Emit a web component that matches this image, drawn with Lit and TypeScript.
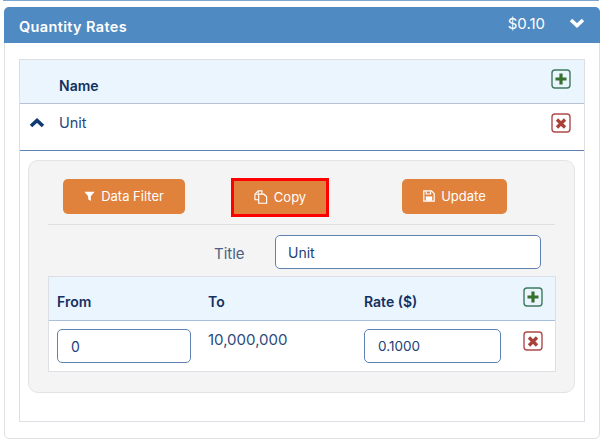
import { LitElement, html, css, svg } from "lit";
import { customElement } from "lit/decorators.js";

const chevron = (up: boolean) => html`<svg class="chev" viewBox="0 0 16 10" width="16" height="10">
  <path d=${up ? "M2 8 L8 2.5 L14 8" : "M2 2 L8 7.5 L14 2"} fill="none" stroke="currentColor" stroke-width="3.6"></path></svg>`;

const plus = html`<svg class="ico" viewBox="0 0 20 20" width="20" height="20">
  <rect x="1" y="1" width="18" height="18" rx="3" fill="none" stroke="#3f7a5c" stroke-width="1.4"></rect>
  <path d="M10 4.5V15.5M4.5 10H15.5" stroke="#37702f" stroke-width="3.2"></path></svg>`;

const cross = html`<svg class="ico" viewBox="0 0 20 20" width="20" height="20">
  <rect x="1" y="1" width="18" height="18" rx="3" fill="none" stroke="#b04a4a" stroke-width="1.4"></rect>
  <path d="M6 6.5L14 14.5M14 6.5L6 14.5" stroke="#a8413a" stroke-width="3.2"></path></svg>`;

const funnel = svg`<path d="M0.5 1.5H13.5L8.7 7.4V13.5L5.3 11V7.4Z" fill="#fff"></path>`;
const copy = svg`<path d="M4.5 10.5H1V4.5L4.5 1H8.5V4.5" fill="none" stroke="#fff" stroke-width="1.2"></path><path d="M1 4.5H4.5V1" fill="none" stroke="#fff" stroke-width="1"></path><path d="M5 4.5H10.5L13.5 7V14.2H5Z" fill="none" stroke="#fff" stroke-width="1.3"></path>`;
const save = svg`<path d="M1 1H10.5L14 4.5V14H1Z" fill="none" stroke="#fff" stroke-width="1.5"></path><path d="M4 1.5V5H9.5V1.5" fill="none" stroke="#fff" stroke-width="1.4"></path><rect x="3.5" y="8" width="8" height="5.5" fill="#fff"></rect>`;

@customElement("app-root")
export class AppRoot extends LitElement {
  static styles = css`
    :host { display: block; width: 602px; height: 442px; overflow: hidden; background: #fff; font-family: Inter, "Liberation Sans", sans-serif; color: #1c3f78; font-size: 14px; box-sizing: border-box; position: relative; }
    * { box-sizing: border-box; }
    .topline { height: 1px; margin: 0 3px; background: #7fa6cf; }
    .panel { margin: 6px 2px 0 4px; height: 432px; border: 1px solid #e0e0e0; border-radius: 5px; background: #fff; }
    .head { height: 36px; margin: -1px -1px 0; background: #4f8ac2; color: #fff; display: flex; align-items: center; padding: 0 15px 0 15px; border-radius: 5px 5px 0 0; }
    .head .t { flex: 1; font-weight: 600; font-size: 14.5px; letter-spacing: 0.35px; position: relative; top: 1px; }
    .head .p { font-size: 15px; margin-right: 24px; position: relative; top: -2px; }
    .head .chev { color: #fff; position: relative; top: -2px; }
    .body { padding: 16px 14px 0 14px; }
    .outer { height: 363px; border: 1px solid #dcdfe4; }
    .hrow { height: 44px; background: #eaf5fe; border-bottom: 1px solid #b6c3d6; display: flex; padding-left: 39px; padding-right: 13px; justify-content: space-between; }
    .name { font-weight: 600; font-size: 14px; color: #14305f; padding-top: 17px; }
    .hrow .ico { margin-top: 9px; }
    .urow { height: 47px; border-bottom: 1px solid #5f82b2; display: flex; padding: 0 13px 0 9px; }
    .urow .chev { color: #0f3a73; margin-top: 14px; }
    .urow .u { flex: 1; padding: 10px 0 0 14px; font-size: 14.5px; color: #25477d; }
    .urow .ico { margin-top: 9px; }
    .inner { margin: 9px 9px 0 8px; height: 233px; background: #f4f4f4; border: 1px solid #e3e3e3; border-radius: 10px; padding: 18px 19px 0 19px; }
    .btns { height: 46px; border-bottom: 1px solid #dfdfdf; display: flex; align-items: flex-start; padding-left: 15px; }
    .btn { width: 122px; height: 35px; background: #e0813c; color: #fff; border-radius: 5px; display: flex; align-items: center; justify-content: center; gap: 6px; font-size: 13px; padding-bottom: 1px; }
    .btn svg { flex: none; }
    .b2 { margin-left: 46px; height: 39px; margin-top: -1px; border: 3px solid #f00; border-radius: 0; width: 98px; }
    .b3 { margin-left: 73px; width: 105px; }
    .titlerow { height: 51px; display: flex; align-items: flex-start; padding: 10px 0 0 166px; }
    .titlerow label { font-size: 15px; width: 61px; padding-top: 9px; color: #4d5f86; }
    .inp { height: 34px; border: 1px solid #5f82b2; border-radius: 5px; background: #fff; font-size: 14px; color: #1c3f78; display: flex; align-items: center; }
    .titlerow .inp { width: 266px; padding-left: 12px; }
    .rates { width: 508px; height: 96px; border: 1px solid #dcdfe4; background: #fff; }
    .rhead { height: 44px; background: #eaf5fe; border-bottom: 1px solid #a9c0dc; }
    .grid { display: grid; grid-template-columns: 151px 156px 159px 20px; padding-left: 8px; }
    .rhead span { font-weight: 600; font-size: 14px; color: #14305f; padding-top: 16px; }
    .rhead .ico { margin-top: 10px; }
    .rrow { padding-top: 8px; }
    .rrow .txt { padding-top: 1px; font-size: 15px; color: #2b4a7a; }
    .rrow .a { width: 134px; padding-left: 13px; }
    .rrow .c { width: 137px; padding-left: 13px; font-size: 13.5px; }
    .rrow .ico { margin-top: 2px; }
  `;

  render() {
    return html`
      <div class="topline"></div>
      <div class="panel">
        <div class="head">
          <span class="t">Quantity Rates</span>
          <span class="p">$0.10</span>
          ${chevron(false)}
        </div>
        <div class="body">
          <div class="outer">
            <div class="hrow"><span class="name">Name</span>${plus}</div>
            <div class="urow">${chevron(true)}<span class="u">Unit</span>${cross}</div>
            <div class="inner">
              <div class="btns">
                <div class="btn"><svg viewBox="0 0 14 14" width="11" height="12">${funnel}</svg>Data Filter</div>
                <div class="btn b2"><svg viewBox="0 0 15 15" width="14" height="14">${copy}</svg>Copy</div>
                <div class="btn b3"><svg viewBox="0 0 15 15" width="12" height="12">${save}</svg>Update</div>
              </div>
              <div class="titlerow"><label>Title</label><div class="inp">Unit</div></div>
              <div class="rates">
                <div class="rhead grid"><span>From</span><span>To</span><span>Rate ($)</span>${plus}</div>
                <div class="rrow grid">
                  <div class="inp a">0</div>
                  <div class="txt">10,000,000</div>
                  <div class="inp c">0.1000</div>
                  ${cross}
                </div>
              </div>
            </div>
          </div>
        </div>
      </div>
    `;
  }
}
